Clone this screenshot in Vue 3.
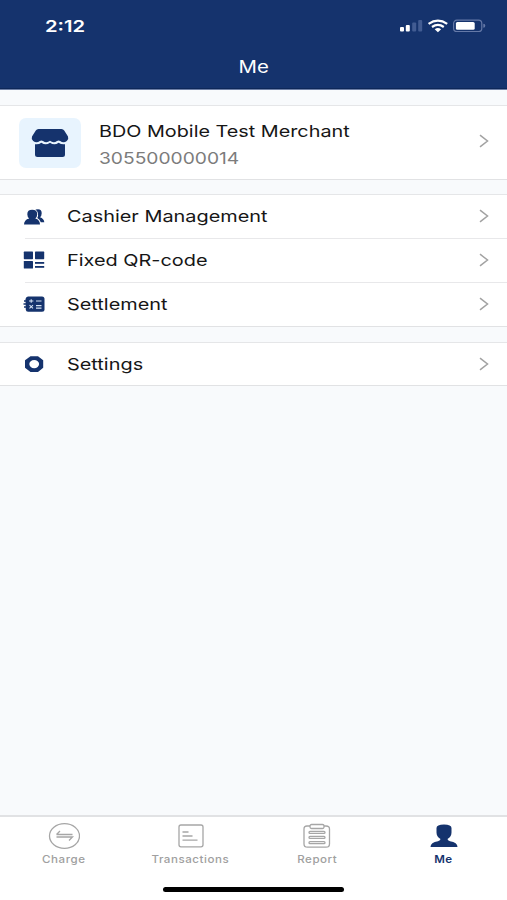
<script setup>
import { ref } from 'vue';

const activeTab = ref('Me');

const groups = [
    [
        { icon: 'cashier', label: 'Cashier Management' },
        { icon: 'qr', label: 'Fixed QR-code' },
        { icon: 'settlement', label: 'Settlement' },
    ],
    [
        { icon: 'settings', label: 'Settings' },
    ],
];

const tabs = ['Charge', 'Transactions', 'Report', 'Me'];
</script>

<template>
    <div class="screen">
        <header>
            <div class="status">
                <span class="wide time">2:12</span>
                <svg class="signals" width="88" height="16" viewBox="0 0 88 16">
                    <g fill="#fff">
                        <rect x="1" y="9" width="4" height="4.5" rx="1" />
                        <rect x="6.8" y="7" width="4" height="6.5" rx="1" />
                    </g>
                    <g fill="#425c92">
                        <rect x="13.2" y="4.5" width="4" height="9" rx="1" />
                        <rect x="19.2" y="2" width="4" height="11.5" rx="1" />
                    </g>
                    <g fill="none" stroke="#fff" stroke-width="2.2">
                        <path d="M29.6 5.8Q38.9 -0.6 48.200 5.8" />
                        <path d="M33 9Q38.900 4.800 44.800 9" />
                    </g>
                    <path d="M35.700 11.200Q38.900 9 42.100 11.200L38.900 14.200Z" fill="#fff" />
                    <rect x="54.600" y="2.100" width="28.200" height="11.400" rx="3.300" fill="none" stroke="#6579a7" stroke-width="1.200" />
                    <rect x="56.900" y="4" width="18.800" height="7.800" rx="1.500" fill="#fff" />
                    <path d="M84.300 5.800Q86.300 6 86.300 7.800Q86.300 9.600 84.300 9.800Z" fill="#6579a7" />
                </svg>
            </div>
            <h1><span class="wide">Me</span></h1>
        </header>

        <main>
            <section class="merchant">
                <div class="avatar">
                    <svg width="38" height="30" viewBox="0 0 38 30">
                        <path d="M7.5 1H30.5Q32.3 1 33.2 2.6L37 8.6Q38 11 35.8 13Q32.5 15.4 29.2 13Q27.6 11.8 26 13Q22.5 15.6 19 12.8Q15.500 15.6 12 13Q10.400 11.800 8.800 13Q5.500 15.400 2.200 13Q0 11 1 8.600L4.800 2.600Q5.700 1 7.500 1Z" />
                        <path d="M4 16.200Q7.500 16.800 10.400 14.700Q14.600 17.800 19 14.700Q23.400 17.800 27.600 14.700Q30.500 16.800 34 16.200V26.500Q34 29 31.500 29H6.500Q4 29 4 26.500Z" />
                    </svg>
                </div>
                <div class="who">
                    <p class="name"><span class="wide">BDO Mobile Test Merchant</span></p>
                    <p class="number"><span class="wide">305500000014</span></p>
                </div>
                <svg class="chevron" width="12" height="16" viewBox="0 0 12 16"><path d="M2 2.200L9.500 8L2 13.800" /></svg>
            </section>

            <ul v-for="(group, i) in groups" :key="i">
                <li v-for="item in group" :key="item.label">
                    <svg class="icon" width="22" height="18" viewBox="0 0 22 18">
                        <template v-if="item.icon === 'cashier'">
                            <path d="M12.500 1.600Q18.700 0 18.700 5.200Q18.700 7.800 17 9.300Q21 10.800 21.300 14.200H17.800Q16.800 11.200 14.300 10Q16.600 5 12.500 1.600Z" />
                            <path d="M9.200 1.800Q14.200 1.800 14.200 6.200Q14.200 9 12.300 10.400Q17 11.600 17 16.600H1Q1 11.600 6.200 10.400Q4.300 9 4.300 6.200Q4.300 1.800 9.200 1.800Z" />
                        </template>
                        <template v-else-if="item.icon === 'qr'">
                            <rect x="0.800" y="0.600" width="9.200" height="7.600" rx="0.600" />
                            <rect x="12" y="0.600" width="9.200" height="7.600" rx="0.600" />
                            <rect x="0.800" y="10" width="9.200" height="7.600" rx="0.600" />
                            <rect x="12" y="11" width="9.200" height="1.800" />
                            <rect x="12" y="15" width="9.200" height="1.800" />
                        </template>
                        <template v-else-if="item.icon === 'settlement'">
                            <path d="M5 1.500H19Q21.500 1.500 21.500 4V14.300Q21.500 16.800 19 16.800H5Q3 16.800 2.800 14.800L2.500 4Q3 1.500 5 1.500Z" />
                            <path class="spiral" d="M1 6H4M0.500 9H4M1 12H4" />
                            <path class="cut" d="M6 6H10.400M8.200 4.200V7.800M13 6H18.500M6.500 10.200L10 13.400M10 10.200L6.500 13.400M13 10.600H18.500M13 13.100H18.500" />
                        </template>
                        <template v-else>
                            <path fill-rule="evenodd" d="M7.500 1.200H15L20.200 5.200V12.800L15 17H7.500L2 12.800V5.200ZM11.200 4.900A4.900 4.200 0 1 0 11.200 13.300A4.900 4.200 0 1 0 11.200 4.900Z" />
                        </template>
                    </svg>
                    <div class="line">
                        <span class="wide">{{ item.label }}</span>
                        <svg class="chevron" width="12" height="16" viewBox="0 0 12 16"><path d="M2 2.200L9.500 8L2 13.800" /></svg>
                    </div>
                </li>
            </ul>
        </main>

        <nav>
            <div class="tabs">
                <button v-for="tab in tabs" :key="tab" type="button" :class="{ active: tab === activeTab }" @click="activeTab = tab">
                    <svg width="32" height="28" viewBox="0 0 32 28">
                        <template v-if="tab === 'Charge'">
                            <ellipse cx="16.500" cy="14" rx="15" ry="12.300" />
                            <path d="M8.500 12.500H24.500M8.500 12.500L12 9M8.500 15H24.500L21 18.500" />
                        </template>
                        <template v-else-if="tab === 'Transactions'">
                            <rect x="4" y="3" width="24" height="21.800" rx="2" />
                            <path d="M7.500 10H13.500M7.500 14H17.500M7.500 18.200H22.500" />
                        </template>
                        <template v-else-if="tab === 'Report'">
                            <path d="M9 4H6Q3 4 3 7V22Q3 25.200 6.500 25.200H25Q28.500 25.200 28.500 22V7Q28.500 4 25 4H23" />
                            <rect x="9" y="2.500" width="14" height="4" rx="1.500" />
                            <rect x="8" y="9.400" width="16" height="2" rx="1" />
                            <rect x="8" y="14.400" width="16" height="2" rx="1" />
                            <rect x="8" y="19.700" width="16" height="2" rx="1" />
                        </template>
                        <path v-else class="person" d="M16 2.500Q23.500 2.500 23.500 6V10.500Q23.500 14.500 19.500 17Q19.500 18.500 22 19.200Q29.500 20.500 29.500 25H2.500Q2.500 20.500 10 19.200Q12.500 18.500 12.500 17Q8.500 14.500 8.500 10.500V6Q8.500 2.500 16 2.500Z" />
                    </svg>
                    <span class="tab-label">{{ tab }}</span>
                </button>
            </div>
            <div class="home-bar"></div>
        </nav>
    </div>
</template>

<style>
body {
    margin: 0;
}
</style>

<style scoped>
.screen {
    display: flex;
    flex-direction: column;
    height: 900px;
    background-color: #f8fafc;
    font-family: Inter, Roboto, sans-serif;
    color: #161616;
    overflow: hidden;
}

/* the interface lettering is wider than Inter */
.wide {
    display: inline-block;
    transform: scaleX(1.2);
    transform-origin: left;
    white-space: nowrap;
}

header {
    box-sizing: border-box;
    height: 90px;
    background-color: #15336d;
    border-bottom: 1px solid #6d7fa6;
    box-shadow: inset 0 -1px #0d2759;
    color: #fff;
}

.status {
    display: flex;
    justify-content: space-between;
    align-items: center;
    height: 52px;
    padding: 0 20px 0 45px;
}

.time {
    font-size: 16px;
    font-weight: 600;
    transform: scaleX(1.26);
}

h1 {
    margin: 3px 0 0;
    text-align: center;
    font-size: 17px;
    line-height: 24px;
    font-weight: 400;
}

h1 .wide {
    transform-origin: center;
}

main {
    flex: 1;
}

.merchant,
ul {
    box-sizing: border-box;
    background-color: #fff;
    border-top: 1px solid #e5e6e8;
    border-bottom: 1px solid #e1e2e4;
}

.merchant {
    display: flex;
    align-items: center;
    height: 75px;
    margin-top: 15px;
    padding: 0 17px 0 19px;
}

.merchant > .chevron {
    margin-bottom: 3px;
}

.avatar {
    display: flex;
    justify-content: center;
    align-items: center;
    width: 62px;
    height: 50px;
    border-radius: 7px;
    background-color: #e8f4fe;
    fill: #15336d;
}

.who {
    flex: 1;
    margin-left: 18px;
    padding-top: 4px;
}

.who p {
    margin: 0;
    font-size: 16.5px;
    line-height: 27px;
}

.who .number {
    color: #7c7c7c;
    font-size: 16px;
}

.chevron {
    flex: none;
    fill: none;
    stroke: #a2a2a2;
    stroke-width: 1.5;
}

ul {
    list-style: none;
    margin: 14px 0 0;
    padding: 0;
}

ul + ul {
    margin-top: 15px;
}

li {
    display: flex;
    align-items: center;
    height: 43px;
    padding-left: 23px;
}

li + li {
    height: 44px;
}

ul + ul li {
    height: 42px;
}

.icon {
    flex: none;
    fill: #15336d;
}

.spiral {
    stroke: #15336d;
    stroke-width: 1.3;
}

.cut {
    stroke: #d5e1f2;
    stroke-width: 1.1;
}

.line {
    flex: 1;
    display: flex;
    justify-content: space-between;
    align-items: center;
    box-sizing: border-box;
    height: 100%;
    margin-left: -20px;
    padding: 0 17px 1px 42px;
    font-size: 16.5px;
}

.line .wide {
    transform: scaleX(1.205);
}

li + li .line {
    border-top: 1px solid #e8e8ea;
}

nav {
    box-sizing: border-box;
    height: 85px;
    border-top: 2px solid #e1e2e4;
    background-color: #fff;
}

.tabs {
    display: flex;
    height: 70px;
    padding-left: 1px;
}

button {
    flex: 1;
    display: flex;
    flex-direction: column;
    align-items: center;
    border: none;
    background: none;
    padding: 5px 0 0;
    font-family: inherit;
    font-size: 10.5px;
    line-height: 16px;
    font-weight: 500;
    color: #a0a0a0;
}

button svg {
    fill: none;
    stroke: #a6a6a6;
    stroke-width: 1.3;
}

.tab-label {
    margin-top: 2px;
    letter-spacing: 0.5px;
    transform: scaleX(1.1);
}

.active {
    color: #15336d;
    font-weight: 600;
}

button .person {
    fill: #15336d;
    stroke: none;
}

.home-bar {
    width: 181px;
    height: 5px;
    margin: 0 auto;
    border-radius: 3px;
    background-color: #000;
}
</style>
